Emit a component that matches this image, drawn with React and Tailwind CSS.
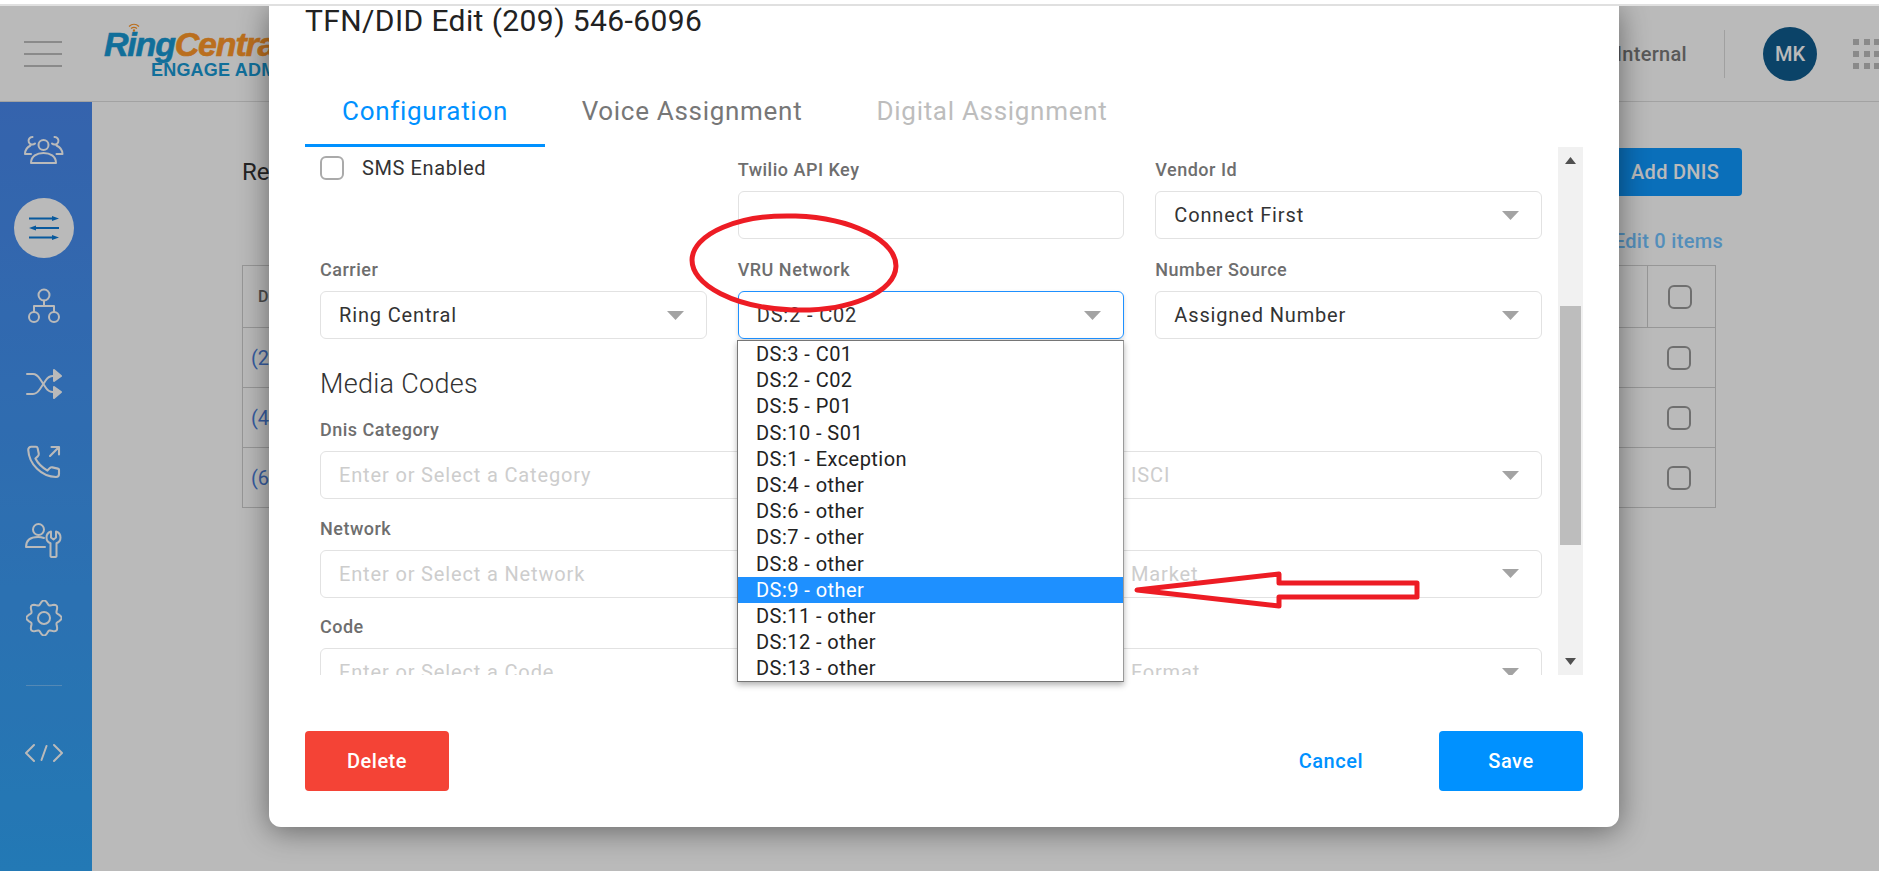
const Caret = () => (
  <svg width="17" height="9" viewBox="0 0 17 9" className="shrink-0">
    <path d="M0 0h17L8.5 9z" fill="#a3a3a3" />
  </svg>
);

const labelClass = 'h-6 mb-[9px] flex items-center text-lg font-medium tracking-[0.5px] text-[#6e6e6e] whitespace-nowrap';

function Field({ label, value, placeholder, select, focused }) {
  return (
    <div className="min-w-0">
      <div className={labelClass}>{label}</div>
      <div
        className={
          'h-12 rounded-md border flex items-center justify-between pl-[18px] pr-[22px] text-xl tracking-[0.85px] whitespace-nowrap ' +
          (focused ? 'border-[#1e90ff] shadow-[0_2px_4px_rgba(0,0,0,0.15)]' : 'border-[#e2e2e2]')
        }
      >
        <span className={value ? 'text-[#333333]' : 'text-[#cdcdcd]'}>{value || placeholder}</span>
        {select ? <Caret /> : null}
      </div>
    </div>
  );
}

const NAV_STROKE = { fill: 'none', stroke: '#ffffff', strokeWidth: 2, strokeLinecap: 'round', strokeLinejoin: 'round' };

const IconUsers = () => (
  <svg width="40" height="30" viewBox="0 0 40 30" {...NAV_STROKE}>
    <circle cx="19.5" cy="10" r="5" />
    <path d="M7 28c0-7 6-10 12.500-10S32 21 32 28z" />
    <path d="M11 8.500A3.800 3.800 0 1 1 8.500 2M6.500 10.500C3.500 12 1 14.500 1 19c3 0 4 0 6 0" />
    <path d="M28 8.500A3.800 3.800 0 1 0 30.500 2M32.500 10.500C35.500 12 38.500 14.500 38.500 19c-3 0-4 0-6 0" />
  </svg>
);

const IconTransfer = () => (
  <svg width="30" height="24" viewBox="0 0 30 24">
    <path d="M0 2.500h24M6 12h24M0 21.500h24" stroke="#0b7bd8" strokeWidth="2" />
    <path d="M23 0l7 2.500-7 2.500zM7 9.500L0 12l7 2.500zM23 19l7 2.500-7 2.500z" fill="#0b7bd8" />
  </svg>
);

const IconNetwork = () => (
  <svg width="32" height="36" viewBox="0 0 32 36" {...NAV_STROKE}>
    <circle cx="16" cy="7" r="5.500" />
    <circle cx="6" cy="29" r="5" />
    <circle cx="26" cy="29" r="5" />
    <path d="M16 12.500V18M6 24v-6h20v6" />
  </svg>
);

const IconShuffle = () => (
  <svg width="36" height="30" viewBox="0 0 36 30" {...NAV_STROKE}>
    <path d="M1 5h6c3 0 5 2 7 5l6 9c2 3 4 4 7 4h3" />
    <path d="M1 25h6c3 0 5-2 7-5l6-9c2-3 4-4 7-4h3" />
    <path d="M28 1l7 6-7 5zM28 18l7 5-7 6z" fill="#ffffff" />
  </svg>
);

const IconPhoneOut = () => (
  <svg width="36" height="36" viewBox="0 0 24 24" {...NAV_STROKE} strokeWidth="1.400">
    <path d="M16 8l6-6M17 2h5v5" />
    <path d="M22 17v3a2 2 0 0 1-2 2C10.500 22 2 13.500 1.500 4a2 2 0 0 1 2-2.200h3.200a1 1 0 0 1 1 .8l.8 3.700a2 2 0 0 1-.6 1.800L6.300 9.700c1.500 3 4.500 6 8 8l1.500-1.600a2 2 0 0 1 1.800-.5l3.600.8a1 1 0 0 1 .8 1z" />
  </svg>
);

const IconUserTool = () => (
  <svg width="38" height="36" viewBox="0 0 38 36" {...NAV_STROKE}>
    <circle cx="13.500" cy="7.500" r="5.500" />
    <path d="M20 25H1c0-7 5-10 12-10 2 0 4 .3 6 1" />
    <path d="M26 9.500c-3 1-4.500 3.500-4.500 6 0 3 1.800 5 4 5.800V34c0 1 1 1 2 1h2c1 0 2 0 2-1V21.300c2.200-.8 4-2.800 4-5.800 0-2.500-1.500-5-4.500-6v6l-2.500 2-2.500-2z" />
  </svg>
);

const gearPath = (() => {
  const parts = [];
  for (let i = 0; i < 96; i++) {
    const t = (i / 96) * Math.PI * 2;
    const r = 15.6 + 2 * Math.cos(8 * t);
    parts.push((i ? 'L' : 'M') + (18 + r * Math.cos(t)).toFixed(2) + ' ' + (18 + r * Math.sin(t)).toFixed(2));
  }
  return parts.join('') + 'z';
})();

const IconGear = () => (
  <svg width="36" height="36" viewBox="0 0 36 36" {...NAV_STROKE}>
    <path d={gearPath} />
    <circle cx="18" cy="18" r="6" />
  </svg>
);

const IconCode = () => (
  <svg width="38" height="20" viewBox="0 0 38 20" {...NAV_STROKE}>
    <path d="M9 2l-8 8 8 8M29 2l8 8-8 8M21.500 3l-5 14" />
  </svg>
);

const navItems = [IconUsers, IconTransfer, IconNetwork, IconShuffle, IconPhoneOut, IconUserTool, IconGear];

const dsOptions = [
  'DS:3 - C01', 'DS:2 - C02', 'DS:5 - P01', 'DS:10 - S01', 'DS:1 - Exception', 'DS:4 - other', 'DS:6 - other',
  'DS:7 - other', 'DS:8 - other', 'DS:9 - other', 'DS:11 - other', 'DS:12 - other', 'DS:13 - other',
];

function Header() {
  return (
    <header className="h-24 shrink-0 border-b border-[#dedede] bg-white flex items-center">
      <div className="w-[104px] pl-6 flex flex-col gap-[10px]">
        <span className="block w-[38px] h-[2px] bg-[#bdbdbd]" />
        <span className="block w-[38px] h-[2px] bg-[#bdbdbd]" />
        <span className="block w-[38px] h-[2px] bg-[#bdbdbd]" />
      </div>
      <div className="relative font-['Liberation_Sans',sans-serif] font-bold whitespace-nowrap">
        <svg className="absolute left-[24px] -top-[5px]" width="12" height="9" viewBox="0 0 12 9" fill="none" stroke="#ff982a" strokeWidth="1.200">
          <path d="M1 3.500C4 .5 8 .5 11 3.500M3 5.500c2-1.500 4-1.500 6 0" />
          <circle cx="6" cy="7.500" r=".6" />
        </svg>
        <div className="italic text-[34px] leading-8 tracking-[-1.200px] [-webkit-text-stroke:0.6px]">
          <span className="text-[#1899d4]">Ring</span>
          <span className="text-[#ff982a]">Central</span>
        </div>
        <div className="pl-[47px] text-[18px] leading-5 tracking-[0.2px] text-[#1899d4]">ENGAGE ADMIN</div>
      </div>
      <div className="ml-auto flex items-center">
        <span className="text-xl tracking-[0.3px] font-medium text-[#7a7a7a]">Internal</span>
        <span className="ml-[37px] w-px h-12 bg-[#dcdcdc]" />
        <span className="ml-[38px] w-[54px] h-[54px] rounded-full bg-[#105d8f] text-white font-medium text-xl flex items-center justify-center">MK</span>
        <div className="ml-9 w-[26px] grid grid-cols-3 gap-x-[6px] gap-y-[6px]">
          {Array.from({ length: 9 }).map((_, i) => (
            <span key={i} className="w-[6px] h-[6px] bg-[#bdbdbd]" />
          ))}
        </div>
      </div>
    </header>
  );
}

function Sidebar() {
  return (
    <aside className="w-[92px] shrink-0 bg-gradient-to-b from-[#4988ed] to-[#30a6f8] flex flex-col items-center pt-[9px] pr-1">
      {navItems.map((Icon, i) => (
        <div key={i} className="h-[78px] flex items-center justify-center">
          {i === 1 ? (
            <div className="w-[60px] h-[60px] rounded-full bg-white flex items-center justify-center">
              <Icon />
            </div>
          ) : (
            <Icon />
          )}
        </div>
      ))}
      <div className="mt-7 w-9 h-px bg-white/30" />
      <div className="mt-7 h-[78px] flex items-center justify-center">
        <IconCode />
      </div>
    </aside>
  );
}

function BackgroundPage() {
  const rows = ['(2', '(4', '(6'];
  return (
    <main className="flex-1 pl-[150px] pr-[137px] pt-[46px]">
      <div className="flex items-center justify-between h-12">
        <span className="text-2xl text-[#333333]">Re</span>
        <button className="ml-auto w-[132px] h-12 rounded bg-[#0f98ff] text-white font-medium text-xl tracking-[0.3px] pl-[21px] text-left">Add DNIS</button>
      </div>
      <div className="mt-[33px] text-right pr-[19px] text-xl tracking-[0.3px] font-medium text-[#72c3ff] leading-6">Edit 0 items</div>
      <div className="mt-3 mr-[26px] border border-[#cfcfcf] border-b-0">
        <div className="h-[62px] flex border-b border-[#cfcfcf]">
          <div className="flex-1 pl-[15px] flex items-center font-medium text-[#6a6a6a]">D</div>
          <div className="w-[68px] border-l border-[#cfcfcf] flex items-center justify-center pr-1">
            <span className="w-6 h-6 rounded-md border-2 border-[#999999]" />
          </div>
        </div>
        {rows.map((r) => (
          <div key={r} className="h-[60px] flex border-b border-[#cfcfcf]">
            <div className="flex-1 pl-[8px] flex items-center text-xl text-[#4c7fdc]">{r}</div>
            <div className="w-[68px] flex items-center justify-center pr-1">
              <span className="w-6 h-6 rounded-md border-2 border-[#999999]" />
            </div>
          </div>
        ))}
      </div>
    </main>
  );
}

function Modal() {
  return (
    <div className="absolute left-[269px] top-0 w-[1350px] h-[821px] bg-white rounded-b-xl px-9 flex flex-col shadow-[0_4px_30px_rgba(0,0,0,0.45)]">
      <h2 className="h-[30px] text-[30px] leading-[30px] tracking-[0.4px] text-[#222222]">TFN/DID Edit (209) 546-6096</h2>
      <div className="mt-[39px] h-[72px] shrink-0 flex text-[26px] tracking-[0.7px]">
        <div className="w-[240px] pt-[3px] flex items-center justify-center border-b-[3px] border-[#0091ff] text-[#0091ff]">Configuration</div>
        <div className="w-[294px] flex items-center justify-center text-[#777777]">Voice Assignment</div>
        <div className="w-[306px] flex items-center justify-center text-[#bdbdbd]">Digital Assignment</div>
      </div>

      <div className="h-[528px] shrink-0 flex overflow-hidden">
        <div className="flex-1 min-w-0 pl-[15px] pr-4 pt-[11px]">
          <div className="grid grid-cols-3 gap-x-[31px] gap-y-[19px]">
            <div className="-mt-[2px] flex items-start gap-[18px]">
              <span className="w-6 h-6 rounded-md border-2 border-[#aaaaaa]" />
              <span className="text-xl leading-[24px] tracking-[0.6px] text-[#333333]">SMS Enabled</span>
            </div>
            <Field label="Twilio API Key" />
            <Field label="Vendor Id" value="Connect First" select />
            <Field label="Carrier" value="Ring Central" select />
            <Field label="VRU Network" value="DS:2 - C02" select focused />
            <Field label="Number Source" value="Assigned Number" select />
          </div>
          <h3 className="mt-[27px] h-9 flex items-center text-[27px] font-light tracking-[0.3px] text-[#333333]">Media Codes</h3>
          <div className="mt-4 grid grid-cols-2 gap-x-[31px] gap-y-[17.500px]">
            <Field label="Dnis Category" placeholder="Enter or Select a Category" />
            <Field label="ISCI" placeholder="Enter or Select a ISCI" select />
            <Field label="Network" placeholder="Enter or Select a Network" />
            <Field label="Market" placeholder="Enter or Select a Market" select />
            <Field label="Code" placeholder="Enter or Select a Code" />
            <Field label="Format" placeholder="Enter or Select a Format" select />
          </div>
        </div>
        <div className="w-[25px] shrink-0 bg-[#f1f1f1] flex flex-col items-center relative">
          <svg width="11" height="7" viewBox="0 0 11 7" className="mt-[10px]"><path d="M5.500 0L11 7H0z" fill="#505050" /></svg>
          <div className="mt-[142px] w-[21px] h-[239px] bg-[#bdbdbd]" />
          <svg width="11" height="7" viewBox="0 0 11 7" className="mt-auto mb-[10px]"><path d="M5.500 7L11 0H0z" fill="#505050" /></svg>
        </div>
      </div>

      <div className="mt-14 flex items-center text-xl font-medium tracking-[0.5px]">
        <button className="w-36 h-[60px] rounded bg-[#f44336] text-white">Delete</button>
        <button className="ml-auto mr-[76px] text-[#0091ff]">Cancel</button>
        <button className="w-36 h-[60px] rounded bg-[#0091ff] text-white">Save</button>
      </div>
    </div>
  );
}

function SelectList() {
  return (
    <div className="absolute left-[737px] top-[334px] w-[387px] h-[342px] overflow-hidden bg-white border border-[#767676] border-r-[#9a9a9a] shadow-[0_3px_6px_rgba(0,0,0,0.3)] text-xl tracking-[0.45px] text-[#222222]">
      {dsOptions.map((o) => (
        <div key={o} className={'h-[26.200px] leading-[26px] pl-[18px] ' + (o === 'DS:9 - other' ? 'bg-[#1e90ff] text-white' : '')}>
          {o}
        </div>
      ))}
    </div>
  );
}

// hand drawn markup that sits on top of the screenshot
function Annotations() {
  return (
    <svg className="absolute left-0 top-0 pointer-events-none" width="1879" height="865" viewBox="0 6 1879 865" fill="none">
      <ellipse cx="794" cy="263" rx="102" ry="47" stroke="#ed1c24" strokeWidth="5" transform="rotate(2 794 263)" />
      <path d="M1137 590L1279 574V583H1417V597H1279V606z" stroke="#ed1c24" strokeWidth="5" strokeLinejoin="round" />
    </svg>
  );
}

export default function App() {
  return (
    <div className="w-full h-[871px] flex flex-col overflow-hidden bg-white font-[Roboto,sans-serif]">
      <div className="h-[6px] shrink-0 border-b-2 border-[#e0e0e0]" />
      <div className="relative flex-1 min-h-0 overflow-hidden">
        <div className="h-full flex flex-col">
          <Header />
          <div className="flex-1 min-h-0 flex">
            <Sidebar />
            <BackgroundPage />
          </div>
        </div>
        <div className="absolute inset-0 bg-black/[0.27]" />
        <Modal />
        <SelectList />
        <Annotations />
      </div>
    </div>
  );
}
